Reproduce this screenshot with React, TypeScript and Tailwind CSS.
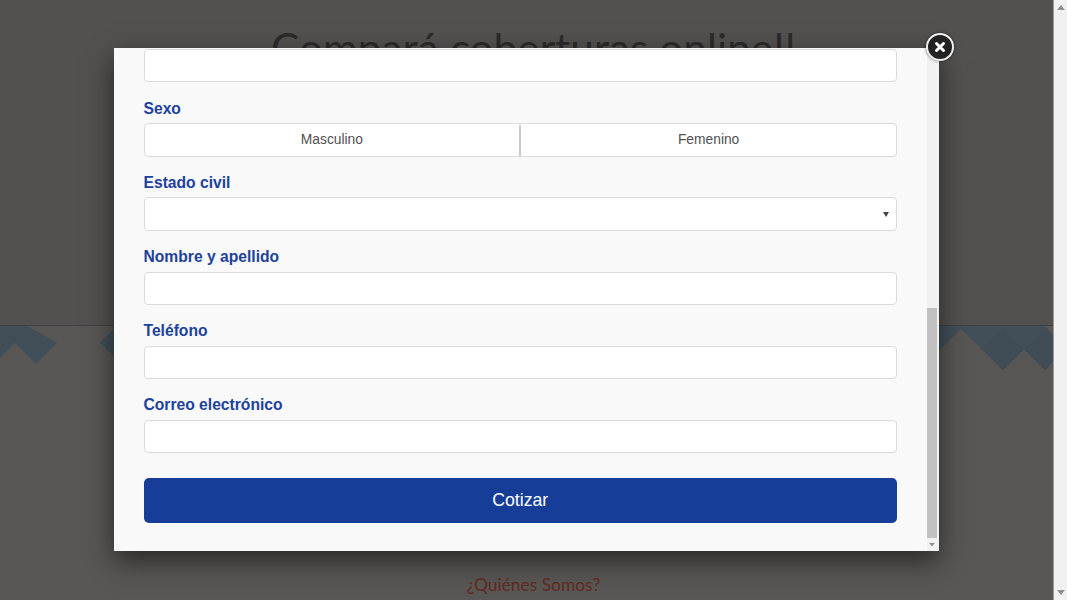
import React from "react";

const Arrow = ({ down, className }: { down?: boolean; className: string }) => (
  <svg width="8" height="5" viewBox="0 0 8 5" className={className}>
    <path d={down ? "M0 0H8L4 5Z" : "M4 0L8 5H0Z"} fill="#8e8e8e" />
  </svg>
);

const fieldCls =
  "block w-full h-[33.3px] rounded-[4px] border border-[#dadada] bg-white";

const Label = ({ children }: { children: React.ReactNode }) => (
  <div className="mt-[16.35px] mb-[4.5px] h-[20px] text-[15.65px] leading-[20px] font-bold text-[#1d429b]">
    {children}
  </div>
);

export default function App() {
  return (
    <div className="relative flex h-[600px] w-full overflow-hidden font-['Liberation_Sans',sans-serif]">
      <main className="flex min-w-0 flex-1 flex-col bg-[#585755]">
        <section className="h-[326px] shrink-0 border-b border-[#3f4247] bg-[#52514f] pt-[22px] pl-[14px] text-center">
          <h1 className="font-['Lato',sans-serif] text-[42.4px] leading-[52px] font-normal text-[#2c2b2a]">
            Compará coberturas online!!
          </h1>
        </section>
        <svg width="1053" height="46" viewBox="0 326 1053 46" className="block shrink-0">
          <path d="M0 326H27L57 343L36 364L15 343L0 358Z" fill="#414e57" />
          <path d="M100 343L117 326H135V360H117Z" fill="#414e57" />
          <path
            d="M939 326V351L961 329L1003 370L1024 350L1045 370L1053 362V335L1045 326Z"
            fill="#424f58"
          />
          <path d="M982 349L1003 328L1024 349L1003 370Z" fill="#404d56" />
          <path d="M1024 349L1045 328L1053 336V362L1045 370Z" fill="#404d56" />
        </svg>
        <p className="mt-[200px] pl-[14px] text-center font-['Lato',sans-serif] text-[17.4px] leading-[26px] text-[#622a20]">
          ¿Quiénes Somos?
        </p>
      </main>

      <aside className="flex w-[14px] shrink-0 flex-col items-center justify-between border-l border-[#9a9a9a] bg-[#f1f1f1] py-[5px]">
        <Arrow className="" />
        <Arrow down className="" />
      </aside>

      {/* fancybox-style dialog */}
      <div className="absolute top-[48px] left-[114px] flex h-[503px] w-[825px] bg-[#f9f9f9] shadow-[0_10px_25px_rgba(0,0,0,0.55)]">
        <form className="min-w-0 flex-1 overflow-hidden pt-[1.2px] pr-[30px] pl-[29.5px]">
          <input className={fieldCls} />
          <Label>Sexo</Label>
          <div className="flex h-[33.3px] rounded-[4px] border border-[#dadada] bg-white pt-[1px] text-[13.8px] text-[#505050]">
            <div className="flex flex-1 items-center justify-center border-r-[2px] border-[#c6c6c6]">Masculino</div>
            <div className="flex flex-1 items-center justify-center">Femenino</div>
          </div>
          <Label>Estado civil</Label>
          <div className={`${fieldCls} relative`}>
            <svg width="6" height="5" viewBox="0 0 6 5" className="absolute top-[14px] right-[7px]">
              <path d="M0 0H6L3 5Z" fill="#444" />
            </svg>
          </div>
          <Label>Nombre y apellido</Label>
          <input className={fieldCls} />
          <Label>Teléfono</Label>
          <input className={fieldCls} />
          <Label>Correo electrónico</Label>
          <input className={fieldCls} />
          <button
            type="button"
            className="mt-[24.8px] block h-[45px] w-full rounded-[5px] bg-[#163d98] text-[17.7px] text-white"
          >
            Cotizar
          </button>
        </form>
        <div className="flex w-[12px] shrink-0 flex-col bg-[#f1f1f1] pr-[2px]">
          <div className="mt-[260px] h-[230px] w-[10px] bg-[#c1c1c1]" />
          <Arrow down className="mt-[4px] ml-[1px] scale-75" />
        </div>
      </div>

      {/* close button */}
      <button
        type="button"
        aria-label="Cerrar"
        className="absolute top-[33px] left-[926px] flex h-[28px] w-[28px] items-center justify-center rounded-full border-[2px] border-[#eee] bg-[#222] shadow-[0_0_3px_rgba(0,0,0,0.6)]"
      >
        <svg width="12" height="12" viewBox="0 0 12 12">
          <path d="M2.5 2.5L9.5 9.5M9.5 2.5L2.5 9.5" stroke="#fff" strokeWidth="3" strokeLinecap="round" />
        </svg>
      </button>
    </div>
  );
}
